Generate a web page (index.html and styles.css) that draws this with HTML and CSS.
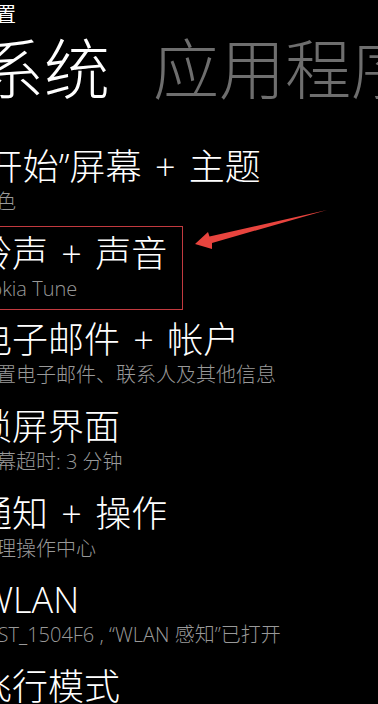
FILE: index.html
```html
<!DOCTYPE html>
<html lang="zh-CN">
<head>
<meta charset="utf-8">
<title>设置</title>
<link rel="stylesheet" href="styles.css">
</head>
<body>
<div class="screen">
  <div class="pivot-title">设置</div>
  <div class="pivot-header">
    <span class="pivot-item active">系统</span>
    <span class="pivot-item">应用程序</span>
  </div>
  <ul class="list">
    <li class="item">
      <div class="title">“开始”屏幕 + 主题</div>
      <div class="sub">深色</div>
    </li>
    <li class="item highlighted">
      <div class="title">铃声 + 声音</div>
      <div class="sub">Nokia Tune</div>
      <span class="mark"></span>
    </li>
    <li class="item">
      <div class="title">电子邮件 + 帐户</div>
      <div class="sub">设置电子邮件、联系人及其他信息</div>
    </li>
    <li class="item">
      <div class="title">锁屏界面</div>
      <div class="sub">屏幕超时: 3 分钟</div>
    </li>
    <li class="item">
      <div class="title">通知 + 操作</div>
      <div class="sub">管理操作中心</div>
    </li>
    <li class="item">
      <div class="title wide-start">WLAN</div>
      <div class="sub">TEST_1504F6 , “WLAN 感知”已打开</div>
    </li>
    <li class="item">
      <div class="title">飞行模式</div>
      <div class="sub">关闭</div>
    </li>
  </ul>
</div>
<svg class="arrow" width="140" height="45" viewBox="190 205 140 45" xmlns="http://www.w3.org/2000/svg">
  <polygon points="195,244 208,232 209.5,236.5 327,210 212,243 212,249" fill="#e8443e"/>
</svg>
</body>
</html>
```

FILE: styles.css
```css
html, body {
  margin: 0;
  padding: 0;
  background: #000;
}

body {
  position: relative;
  width: 378px;
  height: 704px;
  overflow: hidden;
  color: #fff;
  font-family: "Open Sans", "Noto Sans CJK SC", sans-serif;
  font-weight: 300;
}

.screen {
  margin-left: -24px;
  padding-top: 3px;
}

.pivot-title {
  font-size: 20px;
  line-height: 24px;
  font-weight: 400;
  white-space: nowrap;
}

.pivot-header {
  display: flex;
  gap: 43px;
  margin-top: 3px;
  padding-left: 2px;
  font-size: 66px;
  line-height: 76px;
  white-space: nowrap;
}

.pivot-item {
  color: #6e6e6e;
}

.pivot-item.active {
  color: #fff;
}

.list {
  list-style: none;
  margin: 40px 0 0;
  padding: 0;
}

.item {
  position: relative;
  margin-bottom: 18.7px;
}

.title {
  font-size: 36px;
  line-height: 42px;
  word-spacing: 4px;
  white-space: nowrap;
}

.title.wide-start {
  padding-left: 5px;
}

.sub {
  margin-top: 2px;
  font-size: 20px;
  line-height: 24px;
  color: #999;
  white-space: nowrap;
}

.mark {
  position: absolute;
  top: -7px;
  bottom: -9px;
  left: -10px;
  width: 217px;
  border: 1.5px solid #c23a3f;
  box-sizing: border-box;
}

.arrow {
  position: absolute;
  left: 190px;
  top: 205px;
}
```
